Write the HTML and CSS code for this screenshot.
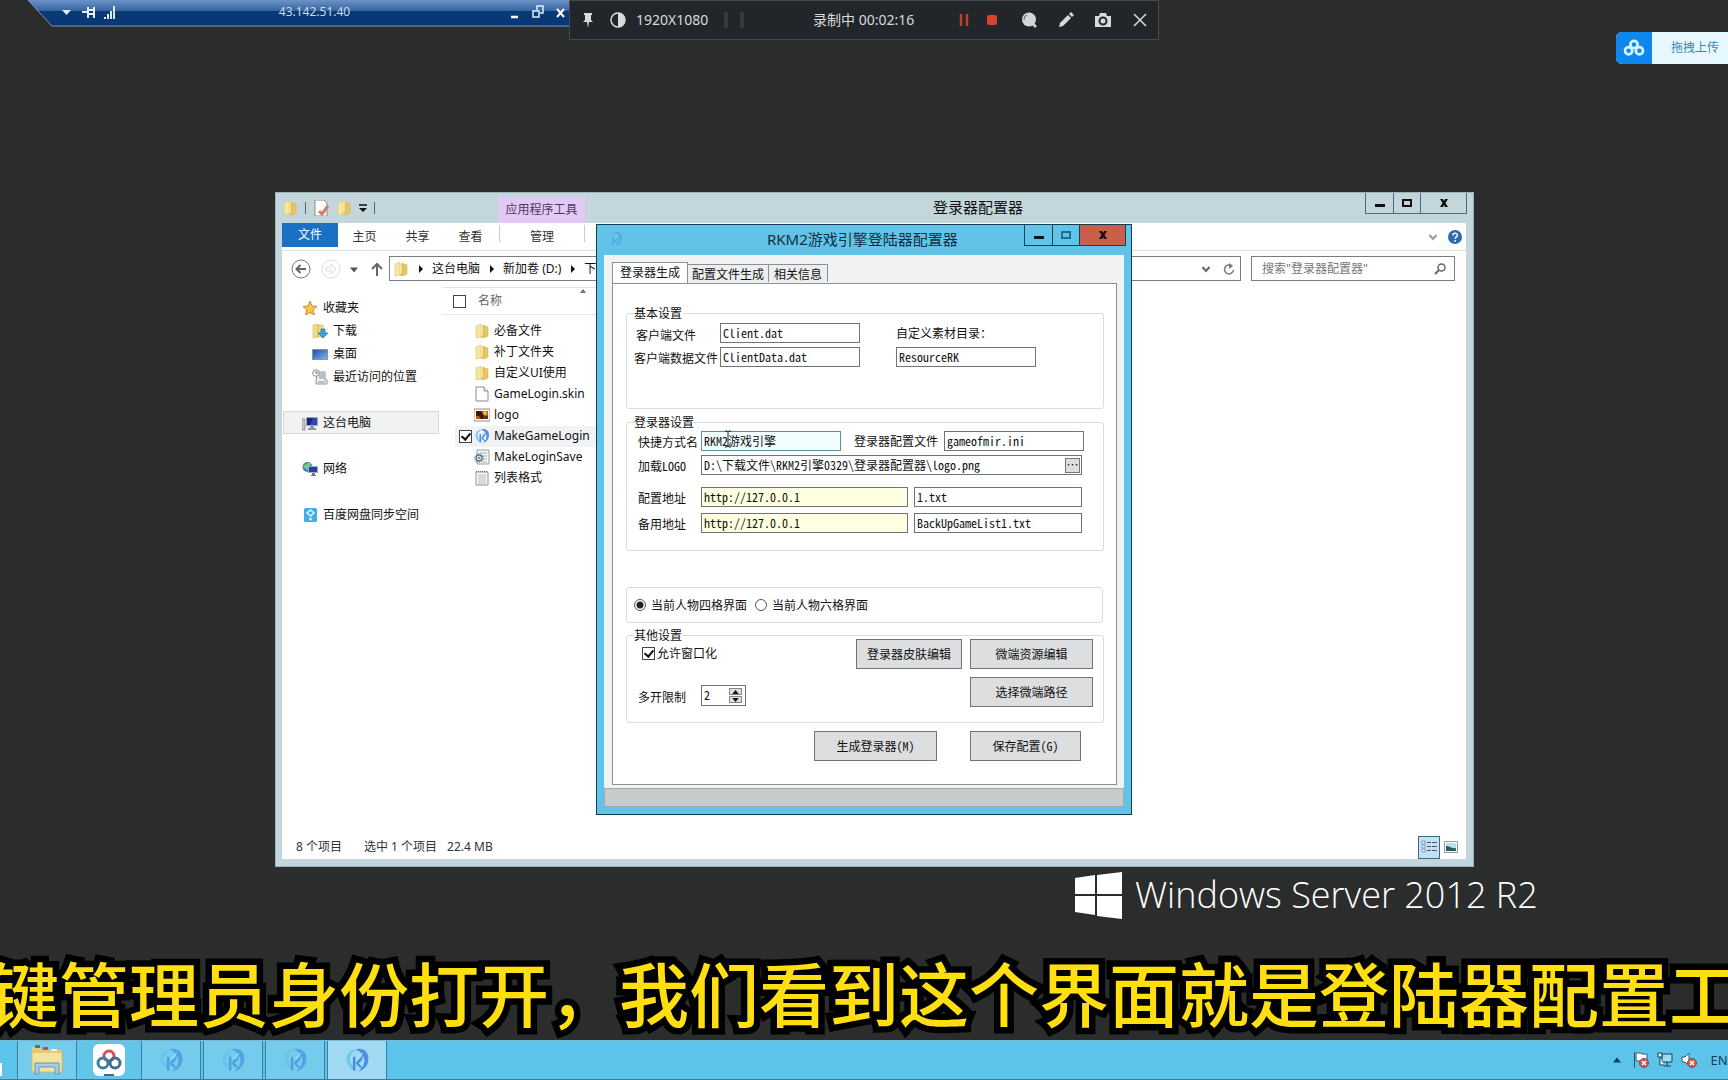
FILE: index.html
```html
<!DOCTYPE html>
<html lang="zh-CN">
<head>
<meta charset="utf-8">
<title>登录器配置器</title>
<link rel="stylesheet" href="styles.css">
</head>
<body>
<svg class="sprite" aria-hidden="true">
  <defs>
    <linearGradient id="gold" x1="0" x2="1"><stop offset="0" stop-color="#f9ecab"/><stop offset="1" stop-color="#dfbb51"/></linearGradient>
    <linearGradient id="screen" x1="0" y1="0" x2="1" y2="1"><stop offset="0" stop-color="#1c4fb0"/><stop offset="1" stop-color="#7fb4e6"/></linearGradient>
    <symbol id="folder" viewBox="0 0 16 16"><path d="M2 3l5-2v13l-5 1z" fill="#f6e7a0" stroke="#dcc46c" stroke-width=".6"/><path d="M7 2h4v11l-4 2z" fill="url(#gold)"/><path d="M10 3l4 1v9l-4 2-3-1 3-2z" fill="#e6c865" stroke="#c9a946" stroke-width=".5"/></symbol>
    <symbol id="page" viewBox="0 0 16 16"><path d="M2 1h8l4 4v10H2z" fill="#fdfdfd" stroke="#8c8c8c"/><path d="M10 1v4h4" fill="#eee" stroke="#8c8c8c"/></symbol>
    <symbol id="lines" viewBox="0 0 16 16"><path d="M2 2h12v13H2z" fill="#fafafa" stroke="#8f9494"/><path d="M2 1.500h12" stroke="#777" stroke-dasharray="1 1"/><path d="M4 5h8M4 7h8M4 9h8M4 11h8M4 13h8" stroke="#a7abab" stroke-width=".8"/></symbol>
    <symbol id="cog" viewBox="0 0 16 16"><path d="M3 1h12v14H3z" fill="#f5f7f8" stroke="#9a9fa3"/><path d="M6 4h7M8 7h5M9 10h4M8 13h5" stroke="#a7b0b5"/><circle cx="5" cy="9" r="3" fill="#dfe8ee" stroke="#607888" stroke-width="1.500"/><circle cx="5" cy="9" r="4.500" fill="none" stroke="#607888" stroke-dasharray="1.200 1.600"/><circle cx="5" cy="9" r="1" fill="#607888"/></symbol>
    <symbol id="photo" viewBox="0 0 16 16"><path d="M0 2h16v12H0z" fill="#fff" stroke="#9c8a78"/><path d="M2 4h12v8H2z" fill="#b5611d"/><path d="M2 4h5l3 5 1 3H7L5 9H2z" fill="#3c1608"/><circle cx="11" cy="6" r="2" fill="#f0b253"/><path d="M9 9h5v3H9z" fill="#702b10"/></symbol>
    <symbol id="engine" viewBox="0 0 32 32"><path d="M13 3C5 5 1 12 4 19c1 4 4 7 7 9l2-3c-5-4-7-9-5-14 1-3 3-5 6-6z" fill="#62c3ea" opacity=".8"/><path d="M14 3c9-3 16 3 16 11 0 8-5 14-12 16 4-4 8-9 7-15-1-6-5-10-11-12z" fill="#4a8fe2"/><path d="M11 12v17h3V12zM15 19l9-11-2 8-4 4 6 7-5-2-4-4z" fill="#3f8fdc"/><path d="M24 6l-10 9 6-1z" fill="#a6dcf5"/></symbol>
    <symbol id="star" viewBox="0 0 16 16"><path d="M8 1l2 5 5 .5-4 3.500 1.500 5L8 12.500 3.500 15 5 10 1 6.500 6 6z" fill="#f6c64e" stroke="#cf8a25"/></symbol>
    <symbol id="download" viewBox="0 0 16 16"><path d="M1 2l5-1v13l-5 1zM6 2h5v12H6z" fill="#f0dc87" stroke="#d2b658" stroke-width=".6"/><path d="M9 6h4v4h3l-5 5-5-5h3z" fill="#3da2da" stroke="#22719f" stroke-width=".7"/></symbol>
    <symbol id="desktop" viewBox="0 0 16 16"><path d="M0 3h16v11H0z" fill="#8397aa"/><path d="M1 4h14v9H1z" fill="url(#screen)"/></symbol>
    <symbol id="recent" viewBox="0 0 16 16"><path d="M5 3h8v8h2v4H4z" fill="#eef1f0" stroke="#8b9491"/><path d="M7 5h5M7 7h5M7 9h5M6 13h7" stroke="#80928d"/><circle cx="4" cy="4" r="3.300" fill="#f8fbfa" stroke="#84928e"/><path d="M4 2v2h2" fill="none" stroke="#666"/></symbol>
    <symbol id="computer" viewBox="0 0 16 16"><path d="M0 4h3v11H0z" fill="#c7ccd2" stroke="#75808b" stroke-width=".7"/><path d="M4 2h12v9H4z" fill="#9facba"/><path d="M5 3h10v7H5z" fill="#3045b7"/><path d="M5 3h6l-3 7H5z" fill="#192475"/><path d="M8 11h4v2h2v2H6v-2h2z" fill="#8c98a4"/></symbol>
    <symbol id="network" viewBox="0 0 16 16"><circle cx="5.500" cy="6" r="5" fill="#3989b3"/><path d="M1 5c3-1 4-4 8-3 0 3-3 2-3 5s-3 1-5-2z" fill="#82c48e"/><path d="M6 5h10v7H6z" fill="#a3b1bd"/><path d="M7 6h8v5H7z" fill="#293dab"/><path d="M10 12h3v2h1v1H9v-1h1z" fill="#6c7a88"/></symbol>
    <symbol id="pan" viewBox="0 0 16 16"><rect x="2" y="1" width="13" height="14" rx="1.500" fill="#43adea"/><path d="M8.500 3L12 6 8.500 9 5 6z" fill="none" stroke="#e5f7ff" stroke-width="1.500"/><circle cx="8.500" cy="12" r="1.500" fill="#d5f0ff"/></symbol>
    <symbol id="trefoil" viewBox="0 0 24 20"><circle cx="12" cy="6" r="4" fill="none" stroke="currentColor" stroke-width="3"/><circle cx="6" cy="13" r="4" fill="none" stroke="currentColor" stroke-width="3"/><circle cx="18" cy="13" r="4" fill="none" stroke="currentColor" stroke-width="3"/></symbol>
    <symbol id="min" viewBox="0 0 10 10"><path d="M0 6h10v3H0z" fill="currentColor"/></symbol>
    <symbol id="max" viewBox="0 0 10 10"><path d="M1 2h8v6H1z" fill="none" stroke="currentColor" stroke-width="2"/></symbol>
    <symbol id="close" viewBox="0 0 10 10"><path d="M1 1h3l1 2 1-2h3L6.500 5 9 9H6L5 7 4 9H1l2.500-4z" fill="currentColor"/></symbol>
    <symbol id="arrow" viewBox="0 0 6 8"><path d="M1 0l4 4-4 4z" fill="currentColor"/></symbol>
    <symbol id="down" viewBox="0 0 8 5"><path d="M0 0h8L4 5z" fill="currentColor"/></symbol>
    <symbol id="up" viewBox="0 0 8 5"><path d="M0 5h8L4 0z" fill="currentColor"/></symbol>
    <symbol id="chevron" viewBox="0 0 10 8"><path d="M1.500 2L5 6l3.500-4" fill="none" stroke="currentColor" stroke-width="2"/></symbol>
    <symbol id="error" viewBox="0 0 10 10"><circle cx="5" cy="5" r="4.500" fill="#d8564a" stroke="#7a5450"/><path d="M3 3l4 4M7 3L3 7" stroke="#fff" stroke-width="1.500"/></symbol>
  </defs>
</svg>

<main class="desktop">
  <header class="remote">
    <svg class="remote-back" viewBox="0 0 544 27" preserveAspectRatio="none">
      <defs><linearGradient id="bar" x1="0" y1="0" x2="0" y2="1"><stop offset="0" stop-color="#7097cb"/><stop offset=".44" stop-color="#35659f"/><stop offset=".46" stop-color="#0b3a74"/><stop offset="1" stop-color="#083877"/></linearGradient></defs>
      <path d="M0-1l25 27h521V-1z" fill="url(#bar)" stroke="#7d9abb"/>
    </svg>
    <svg class="remote-left" viewBox="0 0 60 16"><path d="M3 6h9l-4.500 5z" fill="#e4eef8"/><path d="M23 8h6M29 3v11M29 6h6M29 10h6M35 3v11" fill="none" stroke="#e4eef8" stroke-width="2"/><path d="M46 13v2M49 10v5M52 7v8M55 2v13" stroke="#dce8f4" stroke-width="2"/></svg>
    <span class="remote-name">43.142.51.40</span>
    <svg class="remote-right" viewBox="0 0 56 16"><path d="M1 13h7" stroke="#fff" stroke-width="2.500"/><path d="M27 6V2h6v7h-3M23 7h6v6h-6z" fill="none" stroke="#e4eef8" stroke-width="1.500"/><path d="M47 5l7 8M54 5l-7 8" stroke="#fff" stroke-width="2"/></svg>
  </header>

  <section class="recorder">
    <svg class="i16" viewBox="0 0 16 16"><path d="M4 1h8v2h-1v5l2 2H9l-1 6-1-6H3l2-2V3H4z" fill="#d8dadb"/></svg>
    <svg class="i16 gap-a" viewBox="0 0 16 16"><circle cx="8" cy="8" r="7" fill="none" stroke="#d8dadb" stroke-width="1.500"/><path d="M8 1a7 7 0 0 1 0 14z" fill="#d8dadb"/></svg>
    <span class="res">1920X1080</span>
    <span class="meters"><i></i><i></i></span>
    <span class="clock">录制中 00:02:16</span>
    <span class="tools">
      <svg class="i16" viewBox="0 0 16 16"><path d="M5 2v12M11 2v12" stroke="#c2402b" stroke-width="2.500"/></svg>
      <svg class="i16" viewBox="0 0 16 16"><rect x="3" y="3" width="10" height="10" rx="2" fill="#d8432c"/></svg>
      <svg class="i16" viewBox="0 0 16 16"><circle cx="8" cy="7.500" r="7" fill="#d3d6d8"/><path d="M12 12l3 3" stroke="#d3d6d8" stroke-width="2.500"/><path d="M3 8c0-3 1-4 3-5" fill="none" stroke="#555" /></svg>
      <svg class="i16" viewBox="0 0 16 16"><path d="M1 15l1-4 8-8 3 3-8 8zM11 2l2-2 3 3-2 2z" fill="#d8dadb"/></svg>
      <svg class="i16" viewBox="0 0 16 16"><path d="M0 4h4l1-3h6l1 3h4v11H0z" fill="#d8dadb"/><circle cx="8" cy="9" r="3.500" fill="#d8dadb" stroke="#222529" stroke-width="2"/></svg>
      <svg class="i16" viewBox="0 0 16 16"><path d="M2 2l12 12M14 2L2 14" stroke="#d8dadb" stroke-width="1.500"/></svg>
    </span>
  </section>

  <aside class="upload">
    <span class="upload-logo"><svg viewBox="0 0 24 20"><use href="#trefoil"/></svg></span>
    <span class="upload-text">拖拽上传</span>
  </aside>

  <div class="brand">
    <svg class="brand-logo" viewBox="0 0 47 47"><path d="M0 6l20-3v19H0zM22 3l25-3v22H22zM0 24h20v19L0 40zM22 24h25v23l-25-3z" fill="#fff"/></svg>
    <span>Windows Server 2012 R2</span>
  </div>

  <section class="explorer">
    <div class="ex-title">
      <div class="quick">
        <svg class="i16"><use href="#folder"/></svg><i></i>
        <svg class="i16" viewBox="0 0 16 16"><path d="M2 0h9l3 3v13H2z" fill="#fff" stroke="#8d8d8d"/><path d="M6 11l3 3 6-8" fill="none" stroke="#cf8168" stroke-width="3"/></svg>
        <svg class="i16"><use href="#folder"/></svg>
        <svg class="i8" viewBox="0 0 8 8"><path d="M0 1h8" stroke="#111" stroke-width="1.500"/><path d="M0 4h8L4 8z" fill="#111"/></svg><i></i>
      </div>
      <span class="context">应用程序工具</span>
      <h1>登录器配置器</h1>
      <div class="winbtns"><button aria-label="最小化"><svg><use href="#min"/></svg></button><button aria-label="最大化"><svg><use href="#max"/></svg></button><button class="wide" aria-label="关闭"><svg><use href="#close"/></svg></button></div>
    </div>
    <div class="ex-body">
      <nav class="ribbon">
        <button class="file">文件</button><button>主页</button><button>共享</button><button>查看</button><button class="manage">管理</button>
        <span class="ribbon-end"><svg class="i10"><use href="#chevron"/></svg><svg class="i14" viewBox="0 0 14 14"><circle cx="7" cy="7" r="7" fill="#2b6cae"/><path d="M4.800 5.500c0-3 4.600-2.800 4.600-.3C9.400 7 7 6.800 7 8.800M7 10v1.800" fill="none" stroke="#fff" stroke-width="1.500"/></svg></span>
      </nav>
      <div class="address">
        <svg class="i20" viewBox="0 0 20 20"><circle cx="10" cy="10" r="9" fill="#fff" stroke="#777"/><path d="M15 10H6M9.500 6L5.500 10l4 4" fill="none" stroke="#666" stroke-width="2"/></svg>
        <svg class="i20 fwd" viewBox="0 0 20 20"><circle cx="10" cy="10" r="9" fill="#fff" stroke="#ddd"/><path d="M5 8h5V5l5 5-5 5v-3H5z" fill="none" stroke="#ddd"/></svg>
        <svg class="i8 hist"><use href="#down"/></svg>
        <svg class="i14 parent" viewBox="0 0 14 14"><path d="M7 14V2M2 7l5-5 5 5" fill="none" stroke="#666" stroke-width="2"/></svg>
        <div class="path">
          <svg class="i16"><use href="#folder"/></svg><svg class="i8"><use href="#arrow"/></svg><a href="#pc">这台电脑</a><svg class="i8"><use href="#arrow"/></svg><a href="#d">新加卷 (D:)</a><svg class="i8"><use href="#arrow"/></svg><a href="#down-files">下</a>
          <span class="path-end"><svg class="i10"><use href="#chevron"/></svg><svg class="i12" viewBox="0 0 12 12"><path d="M9 3a4.500 4.500 0 1 0 1.500 4" fill="none" stroke="#777" stroke-width="1.500"/><path d="M6 0l4 3-4 3z" fill="#777"/></svg></span>
        </div>
        <label class="search"><input type="text" aria-label="搜索" placeholder='搜索"登录器配置器"'><svg class="i12" viewBox="0 0 12 12"><circle cx="7.500" cy="4.500" r="3.500" fill="none" stroke="#666" stroke-width="1.500"/><path d="M5 7l-4 4" stroke="#666" stroke-width="2"/></svg></label>
      </div>
      <div class="ex-main">
        <ul class="side">
          <li><svg class="i16"><use href="#star"/></svg>收藏夹</li>
          <li class="sub"><svg class="i16"><use href="#download"/></svg>下载</li>
          <li class="sub"><svg class="i16"><use href="#desktop"/></svg>桌面</li>
          <li class="sub"><svg class="i16"><use href="#recent"/></svg>最近访问的位置</li>
          <li class="root current"><svg class="i16"><use href="#computer"/></svg>这台电脑</li>
          <li class="root"><svg class="i16"><use href="#network"/></svg>网络</li>
          <li class="root"><svg class="i16"><use href="#pan"/></svg>百度网盘同步空间</li>
        </ul>
        <table class="files">
          <thead><tr><th class="pick"><input type="checkbox" aria-label="全选"></th><th>名称<svg class="sort"><use href="#up"/></svg></th></tr></thead>
          <tbody>
            <tr><td></td><td><span><svg class="i16"><use href="#folder"/></svg>必备文件</span></td></tr>
            <tr><td></td><td><span><svg class="i16"><use href="#folder"/></svg>补丁文件夹</span></td></tr>
            <tr><td></td><td><span><svg class="i16"><use href="#folder"/></svg>自定义UI使用</span></td></tr>
            <tr><td></td><td><span><svg class="i16"><use href="#page"/></svg>GameLogin.skin</span></td></tr>
            <tr><td></td><td><span><svg class="i16"><use href="#photo"/></svg>logo</span></td></tr>
            <tr class="chosen"><td><input type="checkbox" aria-label="选择 MakeGameLogin" checked></td><td><span><svg class="i16"><use href="#engine"/></svg>MakeGameLogin</span></td></tr>
            <tr><td></td><td><span><svg class="i16"><use href="#cog"/></svg>MakeLoginSave</span></td></tr>
            <tr><td></td><td><span><svg class="i16"><use href="#lines"/></svg>列表格式</span></td></tr>
          </tbody>
        </table>
      </div>
      <footer class="ex-status">
        <span>8 个项目</span><span class="sel">选中 1 个项目</span><span class="size">22.4 MB</span>
        <button class="details" aria-label="详细信息"><svg viewBox="0 0 16 14"><path d="M1 1h3v3H1zM1 5h3v3H1zM1 9h3v3H1z" fill="#fff" stroke="#8095a8"/><path d="M6 2.500h4M11 2.500h5M6 6.500h4M11 6.500h5M6 10.500h4M11 10.500h5" stroke="#555"/></svg></button>
        <button class="thumbs" aria-label="大图标"><svg viewBox="0 0 14 12"><path d="M.5.5h13v11H.5z" fill="#fff" stroke="#8b9aa5"/><path d="M2 2h10v8H2z" fill="#bfe0ee"/><path d="M2 5c4 0 5 3 10 2v3H2z" fill="#2c5960"/></svg></button>
      </footer>
    </div>
  </section>

  <section class="dialog">
    <div class="dl-title">
      <svg class="i16 dl-icon"><use href="#engine"/></svg>
      <h2>RKM2游戏引擎登陆器配置器</h2>
      <div class="winbtns"><button aria-label="最小化"><svg><use href="#min"/></svg></button><button class="dim" aria-label="最大化"><svg><use href="#max"/></svg></button><button class="wide red" aria-label="关闭"><svg><use href="#close"/></svg></button></div>
    </div>
    <form class="dl-body">
      <div class="tabs"><button type="button" class="on">登录器生成</button><button type="button">配置文件生成</button><button type="button" class="info">相关信息</button></div>
      <div class="panel">
        <fieldset class="basic">
          <legend>基本设置</legend>
          <div class="row"><label for="c1">客户端文件</label><input id="c1" class="mid" value="Client.dat"><label for="c3" class="over">自定义素材目录：</label></div>
          <div class="row"><label for="c2">客户端数据文件</label><input id="c2" class="mid" value="ClientData.dat"><input id="c3" class="mid second" value="ResourceRK"></div>
        </fieldset>
        <fieldset class="login">
          <legend>登录器设置</legend>
          <div class="row"><label for="l1">快捷方式名</label><input id="l1" class="mid focus" value="RKM2游戏引擎"><label for="l2" class="cfg">登录器配置文件</label><input id="l2" class="mid" value="gameofmir.ini"></div>
          <div class="row"><label for="l3">加载LOGO</label><span class="browse"><input id="l3" value="D:\下载文件\RKM2引擎0329\登录器配置器\logo.png"><button type="button">…</button></span></div>
          <div class="row spaced"><label for="l4">配置地址</label><input id="l4" class="url" value="http://127.0.0.1"><input class="list" aria-label="配置文件名" value="1.txt"></div>
          <div class="row"><label for="l5">备用地址</label><input id="l5" class="url" value="http://127.0.0.1"><input class="list" aria-label="备用文件名" value="BackUpGameList1.txt"></div>
        </fieldset>
        <div class="choice">
          <label><input type="radio" name="grid" checked>当前人物四格界面</label>
          <label><input type="radio" name="grid">当前人物六格界面</label>
        </div>
        <fieldset class="other">
          <legend>其他设置</legend>
          <div class="opts">
            <label class="check"><input type="checkbox" checked>允许窗口化</label>
            <div class="limit"><label for="n1">多开限制</label><span class="spin"><input id="n1" value="2"><span class="steps"><button type="button" aria-label="增加"><svg><use href="#up"/></svg></button><button type="button" aria-label="减少"><svg><use href="#down"/></svg></button></span></span></div>
          </div>
          <button type="button" class="push skin">登录器皮肤编辑</button>
          <div class="stack"><button type="button" class="push">微端资源编辑</button><button type="button" class="push">选择微端路径</button></div>
        </fieldset>
        <div class="actions"><button type="button" class="push make">生成登录器(M)</button><button type="button" class="push save">保存配置(G)</button></div>
      </div>
    </form>
    <div class="dl-status"></div>
  </section>
  <svg class="ibeam" viewBox="0 0 8 18"><path d="M1 1h2l1 1 1-1h2M4 2v14M1 17h2l1-1 1 1h2" fill="none" stroke="#222"/></svg>

  <p class="caption">键管理员身份打开，我们看到这个界面就是登陆器配置工</p>

  <footer class="taskbar">
    <span class="start"></span>
    <button class="tk files-app" aria-label="文件资源管理器"><svg viewBox="0 0 32 32"><path d="M1 3h8l2 3h20v21H1z" fill="#e8cd78"/><path d="M4 1h5v3H4z" fill="#4e8054"/><path d="M12 3h5v3h-5z" fill="#b85448"/><path d="M20 5h6v2h-6z" fill="#eef4f6"/><path d="M1 8h30v20H1z" fill="#f5e39d" stroke="#dab95c"/><path d="M4 30V19h24v11h-4v-7H8v7z" fill="#a6cfe4" stroke="#5c99bb"/></svg></button>
    <button class="tk pan-app" aria-label="百度网盘"><svg viewBox="0 0 32 32"><rect width="32" height="32" rx="6" fill="#fff"/><g fill="none" stroke-width="3"><circle cx="16" cy="12" r="5" stroke="#d84f59"/><circle cx="10" cy="19" r="5" stroke="#3c7fa6"/><circle cx="22" cy="19" r="5" stroke="#3f6f92"/></g><path d="M11 30h10v2H11z" fill="#56616b"/></svg></button>
    <button class="tk rk" aria-label="RKM2"><svg><use href="#engine"/></svg></button>
    <button class="tk rk" aria-label="RKM2"><svg><use href="#engine"/></svg></button>
    <button class="tk rk" aria-label="RKM2"><svg><use href="#engine"/></svg></button>
    <button class="tk rk active" aria-label="RKM2"><svg><use href="#engine"/></svg></button>
    <div class="tray">
      <svg class="i8"><use href="#up"/></svg>
      <svg class="i16" viewBox="0 0 16 16"><path d="M1.500 0v16" stroke="#35566a"/><path d="M3 1h5l1 1h5v8H9L8 9H3z" fill="#fff" stroke="#35566a"/><use href="#error" x="6" y="6" width="10" height="10"/></svg>
      <svg class="i16" viewBox="0 0 16 16"><path d="M5 2h10v8H5zM7 14h7M10 10v4" fill="#9fdcf4" stroke="#123f58"/><path d="M1 1h4v4H1zM3 5v8h4" fill="#e8f8ff" stroke="#123f58"/></svg>
      <svg class="i16" viewBox="0 0 16 16"><path d="M1 5h3l4-4v13l-4-4H1z" fill="#fff" stroke="#35566a"/><use href="#error" x="6" y="6" width="10" height="10"/></svg>
      <span>ENG</span>
    </div>
  </footer>
</main>
</body>
</html>
```

FILE: styles.css
```css
* { box-sizing: border-box; }
body { margin: 0; background: #2b2d2d; color: #111; font: 12px/16px "Noto Sans", "Noto Sans CJK SC", sans-serif; }
h1, h2, p, ul { margin: 0; padding: 0; font-weight: 400; }
ul { list-style: none; }
button, input { font: inherit; color: inherit; margin: 0; padding: 0; border: 0; border-radius: 0; background: none; }
a { color: inherit; text-decoration: none; }
svg { display: block; flex: none; }
.sprite { position: absolute; width: 0; height: 0; }
.i8 { width: 8px; height: 8px; }
.i10 { width: 10px; height: 8px; }
.i12 { width: 12px; height: 12px; }
.i14 { width: 14px; height: 14px; }
.i16 { width: 16px; height: 16px; }
.i20 { width: 20px; height: 20px; }
.desktop { position: relative; min-height: 100vh; overflow: hidden; }

/* remote connection bar */
.remote { position: absolute; left: 27px; top: 0; width: 542px; height: 27px; display: flex; align-items: center; justify-content: space-between; padding: 0 3px 3px 32px; }
.remote-back { position: absolute; left: 0; top: 0; width: 100%; height: 27px; }
.remote-left { position: relative; width: 60px; height: 16px; }
.remote-right { position: relative; width: 56px; height: 16px; }
.remote-name { position: relative; color: #c9dcf2; }

/* screen recorder */
.recorder { position: absolute; left: 569px; top: 0; width: 590px; height: 40px; padding: 0 10px; display: flex; align-items: center; background: #22262b; border: 1px solid #44484b; color: #d8dadb; font-size: 14px; }
.gap-a { margin-left: 14px; }
.res { margin-left: 10px; width: 88px; }
.meters { display: flex; gap: 12px; }
.meters i { width: 4px; height: 16px; background: #36393e; }
.clock { margin-left: 69px; }
.tools { margin-left: auto; display: flex; align-items: center; gap: 21px; }
.tools svg:first-child { margin-right: -9px; }

.upload { position: absolute; right: 0; top: 32px; width: 112px; height: 32px; display: flex; border-radius: 6px 0 0 6px; overflow: hidden; background: #e8f8ff; }
.upload-logo { width: 36px; display: grid; place-items: center; background: #0d86ee; color: #d5f4ff; }
.upload-logo svg { width: 22px; height: 18px; }
.upload-text { flex: 1; padding-left: 10px; text-align: center; line-height: 32px; color: #3387b5; }

.brand { position: absolute; left: 1075px; top: 868px; display: flex; align-items: center; gap: 13px; color: #fff; font: 300 36px/54px "Open Sans", sans-serif; white-space: nowrap; }
.brand-logo { width: 47px; height: 47px; }

/* shared caption buttons */
.winbtns { display: flex; border: 1px solid #4b6b78; border-top: 0; }
.winbtns button { width: 27px; height: 20px; display: grid; place-items: center; }
.winbtns button + button { border-left: 1px solid #4b6b78; }
.winbtns .wide { width: 46px; }
.winbtns svg { width: 10px; height: 10px; }

/* explorer window */
.explorer { position: absolute; left: 275px; top: 192px; width: 1199px; height: 675px; padding: 0 7px 7px 6px; display: flex; flex-direction: column; background: #c2d6dc; border: 1px solid #9db2b9; }
.ex-title { height: 30px; display: flex; align-items: flex-start; }
.quick { display: flex; align-items: center; gap: 7px; height: 30px; width: 216px; }
.quick i { width: 1px; height: 12px; background: #667; }
.context { width: 87px; height: 26px; margin-top: 4px; line-height: 26px; text-align: center; color: #4b3a5c; background: #e3c9f5; }
.ex-title h1 { flex: 1; padding-left: 348px; font-size: 15px; line-height: 29px; }
.explorer .winbtns { margin-right: -1px; }
.ex-body { flex: 1; display: flex; flex-direction: column; background: #fff; }
.ribbon { height: 28px; display: flex; align-items: flex-start; border-bottom: 1px solid #dcdfe0; color: #333; }
.ribbon button { width: 53px; height: 27px; }
.ribbon .file { width: 56px; height: 24px; color: #fff; background: #1a70c5; }
.ribbon .manage { width: 86px; height: 17px; margin: 2px 0 0 2px; padding: 6px 0 0; line-height: 12px; border: solid #ccc; border-width: 0 1px; white-space: nowrap; }
.ribbon-end { margin-left: auto; padding: 7px 4px 0 0; display: flex; align-items: center; gap: 10px; color: #999; }
.address { height: 35px; padding: 0 11px 0 9px; display: flex; align-items: center; color: #555; }
.fwd { margin-left: 10px; }
.hist { margin-left: 9px; padding-top: 2px; }
.parent { margin-left: 12px; }
.path { flex: 1; height: 25px; margin-left: 5px; padding: 0 5px 0 3px; display: flex; align-items: center; border: 1px solid #7c7c7c; color: #111; }
.path .i8 { margin: 0 7px 0 8px; }
.path-end { margin-left: auto; display: flex; align-items: center; gap: 12px; color: #666; }
.search { width: 204px; height: 25px; margin-left: 10px; padding: 0 8px 0 10px; display: flex; align-items: center; border: 1px solid #7c7c7c; }
.search input { flex: 1; min-width: 0; outline: 0; }
.search input::placeholder { color: #777; opacity: 1; }
.ex-main { flex: 1; display: flex; align-items: flex-start; gap: 3px; }
.side { width: 157px; padding-top: 10px; }
.side li { height: 23px; padding-left: 19px; display: flex; align-items: center; gap: 5px; margin-left: 1px; white-space: nowrap; }
.side .sub { padding-left: 29px; }
.side .root { margin-top: 23px; padding-left: 18px; border: 1px solid transparent; }
.side .current { background: #f1f2f2; border-color: #d6d8d8; }
.files { width: 300px; border-collapse: collapse; table-layout: fixed; margin-top: 1px; }
.files th { height: 27px; padding: 0; border: solid #e4e6e6; border-width: 1px 0; text-align: left; font-weight: 400; color: #666; position: relative; }
.files .pick { width: 32px; padding-left: 11px; }
.files thead th:last-child { padding-left: 4px; }
.sort { position: absolute; left: 105px; top: 1px; width: 8px; height: 4px; color: #777; }
.files tbody tr { height: 21px; }
.files tbody tr:first-child td { padding-top: 6px; height: 27px; }
.files td { padding: 0; }
.files td:first-child input { margin-left: 17px; }
.files td span { display: flex; align-items: center; gap: 4px; white-space: nowrap; }
.chosen { background: linear-gradient(to right, transparent 13px, #f0f2f3 13px); }
input[type="checkbox"] { appearance: none; display: block; width: 13px; height: 13px; border: 1px solid #444; background: #fff; flex: none; }
input[type="checkbox"]:checked::after { content: ""; display: block; width: 4px; height: 7px; margin: 0 0 0 3px; border: solid #111; border-width: 0 2px 2px 0; transform: rotate(40deg); }
.ex-status { height: 24px; padding: 0 8px 0 14px; display: flex; align-items: center; color: #333; white-space: nowrap; }
.ex-status .sel { margin-left: 22px; }
.ex-status .size { margin-left: 10px; }
.details { width: 22px; height: 23px; margin-left: auto; display: grid; place-items: center; border: 1px solid #3a6885; background: #c3e0f5; }
.details svg { width: 16px; height: 14px; }
.thumbs { margin-left: 4px; }
.thumbs svg { width: 14px; height: 12px; }

/* configuration dialog */
.dialog { position: absolute; left: 596px; top: 224px; width: 536px; height: 591px; padding: 0 7px 7px; display: flex; flex-direction: column; background: #62c3e8; border: 1px solid #153d50; }
.dl-title { height: 30px; display: flex; align-items: flex-start; }
.dl-icon { margin: 6px 0 0 3px; opacity: .5; }
.dl-title h2 { flex: 1; padding-left: 144px; font-size: 15px; line-height: 28px; color: #10303f; white-space: nowrap; }
.dialog .winbtns { margin-right: -2px; border-color: #124258; }
.dialog .winbtns button { border-color: #124258; height: 20px; color: #111; }
.dialog .winbtns .dim { color: #226f8c; }
.dialog .winbtns .red { background: #c75f4b; }
.dl-body { flex: 1; padding: 7px 6px 3px 7px; display: flex; flex-direction: column; background: #f0f2f3; border: solid #e2f8ff; border-width: 0 1px; font-family: "Noto Sans Mono CJK SC", "Noto Sans CJK SC", monospace; }
.tabs { display: flex; align-items: flex-end; height: 21px; padding-bottom: 1px; }
.tabs button { height: 18px; line-height: 16px; padding: 0 4px; border: 1px solid #8d9092; border-width: 1px 1px 0 0; background: #eceeef; }
.tabs .info { padding: 0 5px; }
.tabs .on { height: 21px; padding: 0 7px 3px; border-left-width: 1px; background: #fff; margin-bottom: -1px; position: relative; }
.panel { flex: 1; padding: 21px 12px 0 13px; border: 1px solid #8d9092; background: #fff; }
fieldset { margin: 0; padding: 0; border: 1px solid #dadddd; border-radius: 3px; min-width: 0; }
legend { margin-left: 7px; padding: 0; line-height: 16px; }
.row { display: flex; align-items: center; height: 20px; margin-bottom: 6px; white-space: nowrap; }
.dl-body input:not([type]) { height: 20px; padding: 0 0 2px 2px; border: 1px solid #6f7476; background: #fff; outline: 0; }
.dl-body .mid { width: 140px; }
.basic { height: 104px; }
.basic .row { padding-left: 7px; margin-top: 2px; margin-bottom: 6px; }
.basic .row label:first-child { width: 86px; padding-top: 2px; }
.basic .over, .basic .second { margin-left: 36px; }
.basic legend + .row label:first-child { padding: 3px 0 0 2px; }
.basic legend + .row { margin-bottom: 4px; }
.login { height: 137px; margin-top: 5px; }
.login .row { padding-left: 11px; margin-bottom: 4px; }
.login legend + .row { margin-top: 1px; }
.login .row.spaced { margin-top: 12px; margin-bottom: 6px; }
.login .row label:first-child { width: 63px; padding-top: 2px; }
.login .cfg { width: 90px; margin-left: 13px; }
.dl-body input.focus:not([type]) { border-color: #5c90a0; background: #f1fdff; }
.dl-body input.url:not([type]) { width: 207px; margin-right: 6px; background: #ffffe1; }
.dl-body .list { width: 168px; }
.browse { width: 381px; height: 20px; display: flex; align-items: center; border: 1px solid #6f7476; padding-right: 1px; }
.dl-body .browse input:not([type]) { flex: 1; border: 0; height: 18px; padding-bottom: 1px; }
.browse button { width: 15px; height: 15px; border: 1px solid #777; background: #dcdedf; line-height: 10px; }
.choice { height: 36px; margin: 36px 1px 0 0; padding: 0 7px; display: flex; align-items: center; gap: 8px; border: 1px solid #dadddd; border-radius: 3px; }
.choice label { display: flex; align-items: center; gap: 5px; }
input[type="radio"] { appearance: none; width: 12px; height: 12px; border: 1px solid #555; border-radius: 50%; background: #fff; }
input[type="radio"]:checked { background: radial-gradient(#222 0 3px, #fff 4px); }
.other { height: 96px; margin-top: 4px; display: grid; grid-template-columns: 1fr 106px 123px; column-gap: 8px; padding-right: 10px; }
.other legend { margin-bottom: -4px; }
.opts { padding: 6px 0 0 11px; }
.check { display: flex; align-items: center; gap: 2px; padding-left: 4px; }
.limit { display: flex; align-items: center; height: 21px; margin-top: 24px; }
.limit label { width: 63px; padding-top: 3px; }
.spin { width: 45px; height: 21px; display: flex; align-items: center; border: 1px solid #6f7476; padding-right: 3px; }
.dl-body .spin input:not([type]) { flex: 1; min-width: 0; border: 0; height: 18px; }
.steps { display: grid; gap: 1px; }
.steps button { width: 13px; height: 7px; display: grid; place-items: center; border: 1px solid #888; background: #dcdedf; }
.steps svg { width: 7px; height: 4px; }
.push { height: 30px; border: 1px solid #6f7476; background: #dcdedf; white-space: nowrap; }
.stack { display: grid; gap: 8px; align-content: start; }
.actions { display: flex; justify-content: flex-end; gap: 33px; padding: 8px 23px 0 0; }
.make { width: 123px; }
.save { width: 111px; }
.dl-status { height: 19px; background: #c8cbcb; border: 1px solid #a2aaad; }
.ibeam { position: absolute; left: 724px; top: 430px; width: 8px; height: 18px; }

.caption { position: absolute; left: 50%; top: 942px; width: 1750px; margin-left: -875px; color: #ffdf10; font: 500 70px/100px "Noto Sans CJK SC", sans-serif; white-space: nowrap; -webkit-text-stroke: 13px #000; paint-order: stroke fill; stroke-linejoin: round; text-align: center; }

/* taskbar */
.taskbar { position: absolute; left: 0; right: 0; bottom: 0; height: 40px; display: flex; background: #5cc4ea; border-top: 1px solid #78b9d1; border-bottom: 1px solid #3b7c98; overflow: hidden; }
.start { width: 17px; }
.start::before { content: ""; display: block; width: 2px; height: 13px; margin-top: 22px; background: #fff; }
.tk { height: 38px; display: grid; place-items: center; background: #74cbec; border: solid #33809f; border-width: 0 1px 0 0; }
.tk svg { width: 32px; height: 32px; }
.files-app { width: 60px; border-left-width: 1px; }
.pan-app { width: 65px; background: #62c5ea; }
.rk { width: 60px; margin-right: 2px; border-left-width: 1px; }
.pan-app + .rk { margin-left: -1px; }
.rk svg { width: 26px; height: 28px; opacity: .7; }
.rk.active { background: #a1d9f3; }
.rk.active svg { opacity: 1; }
.tray { margin-left: auto; margin-right: -9px; display: flex; align-items: center; gap: 8px; color: #123f58; font-size: 13px; }
.tray .i8 { margin-right: 4px; }
.tray span { margin-left: 5px; }
```
